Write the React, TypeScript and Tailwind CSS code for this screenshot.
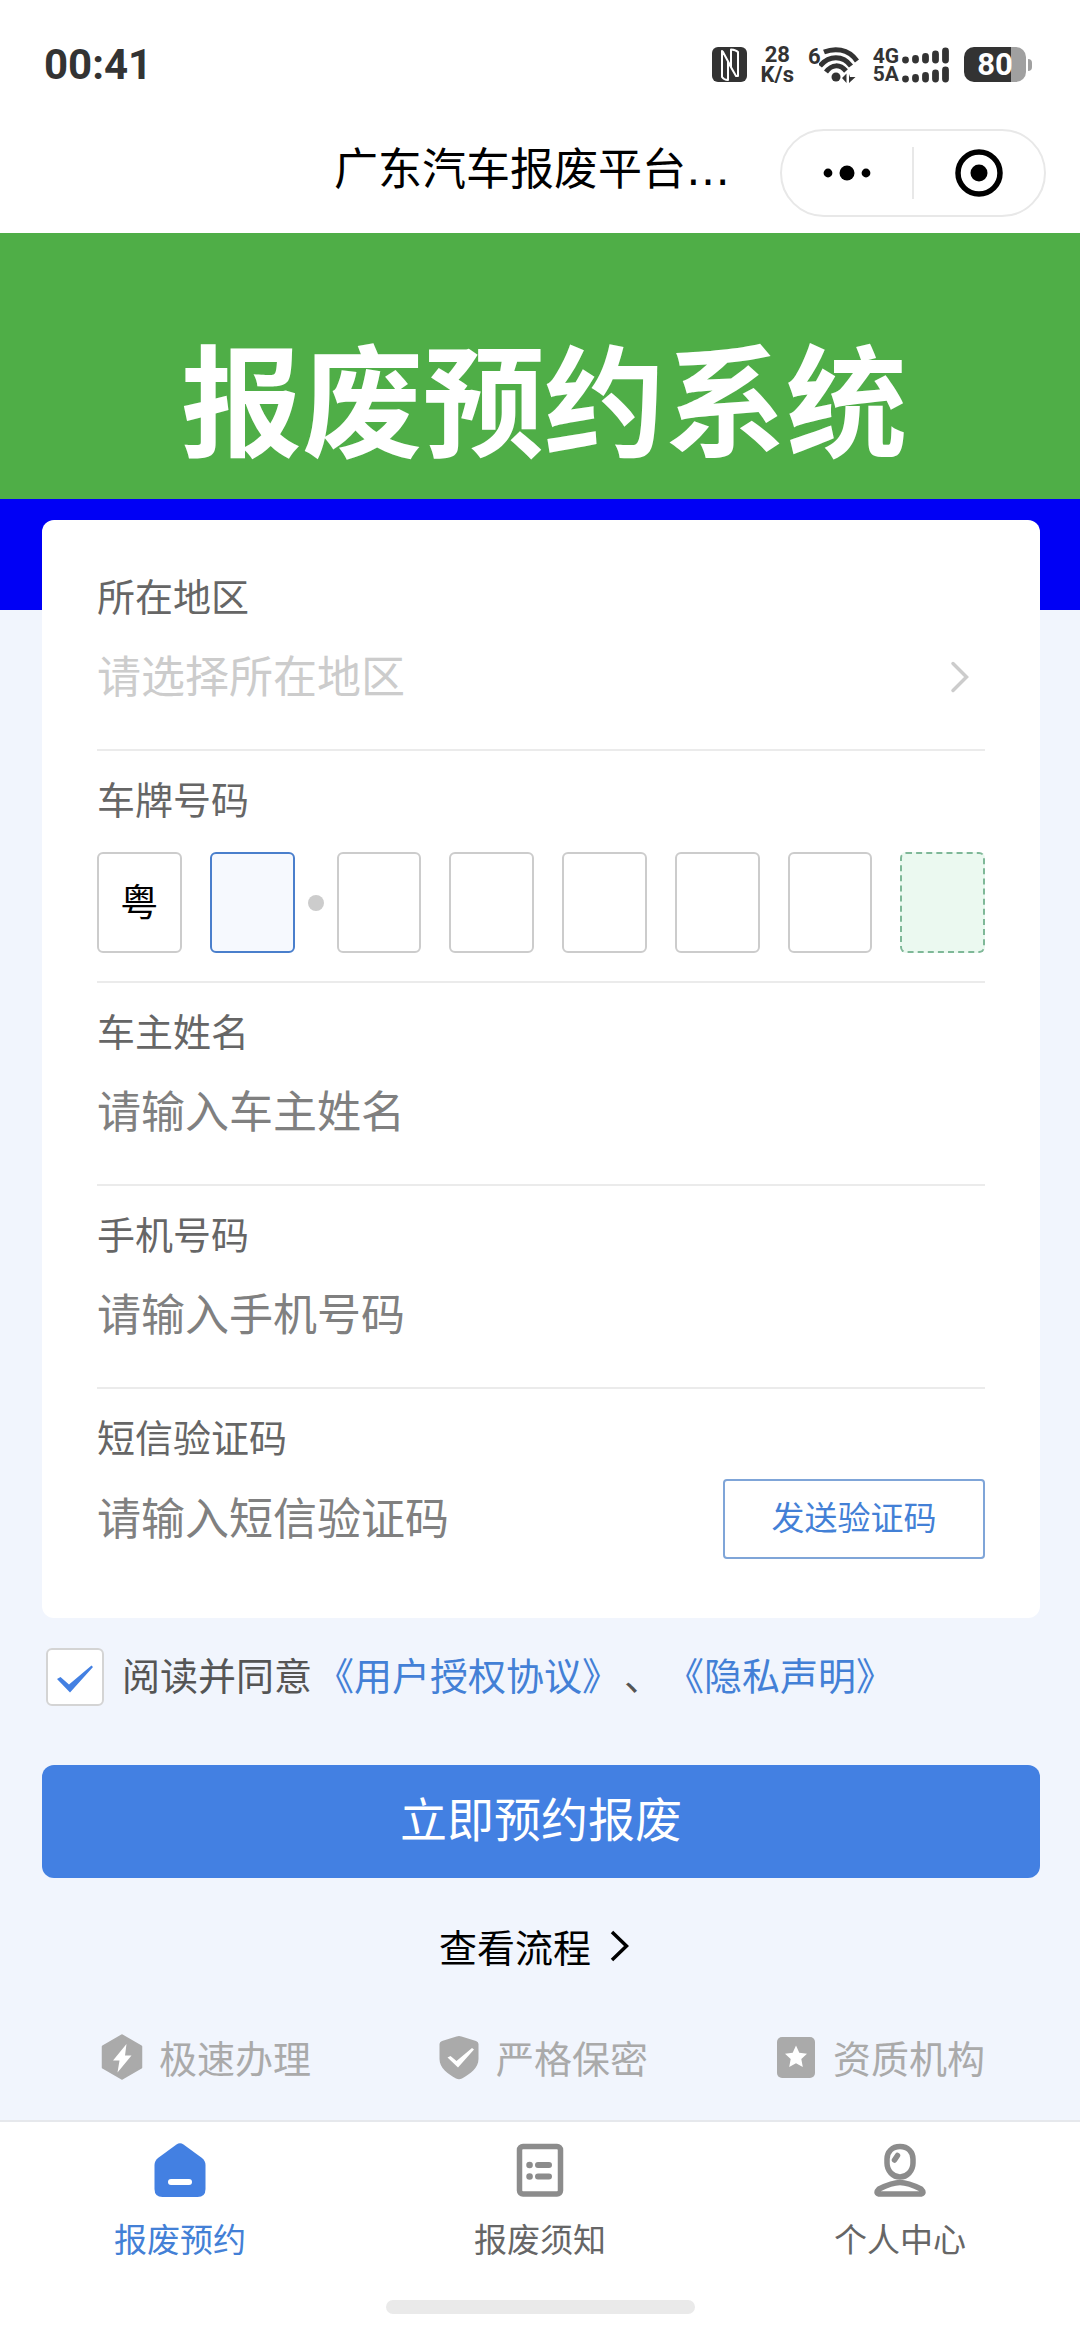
import React, { useState } from 'react';

const StatusBar = () => (
  <div className="flex h-[129px] items-center justify-between pl-11 pr-12 font-['Roboto',sans-serif] text-[#333]">
    <span className="text-[42px] font-bold leading-none">00:41</span>
    <div className="flex items-center gap-[14px]">
      {/* NFC */}
      <svg className="h-[35px] w-[35px]" viewBox="0 0 35 35">
        <rect width="35" height="35" rx="6" fill="#333" />
        <path d="M10 4 L10 30 Q12 33 16 33 L16 15 L24 29 L26 29 L26 5 Q24 3 19 2.500 L19 20 L11 5 Z" fill="none" stroke="#fff" strokeWidth="2" strokeLinejoin="round" />
      </svg>
      {/* Network speed */}
      <div className="flex flex-col items-center text-[22px] font-bold leading-5">
        <span>28</span>
        <span>K/s</span>
      </div>
      {/* Wi-Fi */}
      <div className="flex items-start">
        <span className="text-[22px] font-bold leading-5">6</span>
        <svg className="-ml-0.5 h-[36px] w-[40px]" viewBox="0 0 40 36" fill="none" stroke="#333" strokeWidth="5">
          <path d="M5 5 C15 1 29 1 38 14" />
          <path d="M1 19 C10 8 24 8 32 19" />
          <path d="M7 25 C13 17 21 17 27 24" />
          <circle cx="17" cy="30" r="4.500" fill="#333" stroke="none" />
          <path d="M23 31 L27.500 26.500 V36 Z M30 27 V36 L36.500 30 H31 Z" fill="#333" stroke="none" />
        </svg>
      </div>
      {/* Mobile signal */}
      <div className="flex items-center gap-[3px]">
        <div className="flex flex-col text-[21px] font-bold leading-[18px]">
          <span>4G</span>
          <span>5A</span>
        </div>
        <svg className="h-[36px] w-[48px]" viewBox="0 0 48 36" stroke="#333" strokeWidth="6.800" strokeLinecap="round">
          <path d="M3.500 13 V13.100 M13.500 11.500 V13 M23.500 9.500 V13 M33.500 7 V13 M43.500 4 V13" />
          <path d="M3.500 32 V32.100 M13.500 30.500 V32 M23.500 28.500 V32 M33.500 26 V32 M43.500 23 V32" />
        </svg>
      </div>
      {/* Battery */}
      <div className="flex items-center gap-0.5">
        <div className="flex h-[35px] w-[62px] items-center justify-center rounded-[10px] bg-linear-to-r from-[#333] from-[76%] to-[#a0a0a0] to-[76%]">
          <span className="text-[31px] font-bold leading-none text-white">80</span>
        </div>
        <span className="h-3 w-1 rounded-r bg-[#a0a0a0]" />
      </div>
    </div>
  </div>
);

const TitleBar = () => (
  <header className="flex items-center justify-end pb-4 pr-[34px]">
    <h1 className="pb-2.5 pr-[50px] text-[44px] leading-[60px] text-black">
      广东汽车报废平台<span className="font-['DejaVu_Sans',sans-serif]">…</span>
    </h1>
    <div className="flex h-[88px] w-[266px] items-center rounded-full border-2 border-[#e8e8e8] bg-white">
      <button type="button" aria-label="更多" className="flex h-full flex-1 items-center justify-center">
        <svg className="h-4 w-12" viewBox="0 0 48 16">
          <circle cx="5" cy="8" r="4.400" />
          <circle cx="24" cy="8" r="7.500" />
          <circle cx="43" cy="8" r="4.400" />
        </svg>
      </button>
      <span className="h-[52px] w-0.5 bg-[#e8e8e8]" />
      <button type="button" aria-label="关闭" className="flex h-full flex-1 items-center justify-center">
        <svg className="h-12 w-12" viewBox="0 0 48 48">
          <circle cx="24" cy="24" r="21" fill="none" stroke="#000" strokeWidth="5.500" />
          <circle cx="24" cy="24" r="8.500" />
        </svg>
      </button>
    </div>
  </header>
);

interface FieldProps {
  id: string;
  label: string;
  children: React.ReactNode;
}

const Field = ({ id, label, children }: FieldProps) => (
  <div className="border-b-2 border-[#ebebeb] pb-[42px] pt-[21px]">
    <label htmlFor={id} className="block text-[38px] leading-[52px] text-[#666]">{label}</label>
    <div className="mt-[26px] flex h-[60px] items-center">{children}</div>
  </div>
);

const inputClass =
  'h-[60px] w-full min-w-0 flex-1 bg-transparent pb-1.5 text-[44px] text-[#333] outline-none placeholder:text-[#808080]';

const plateClass = 'h-[101px] w-full min-w-0 flex-1 rounded-md border-2 pb-1.5 text-center text-[38px] text-black outline-none';

const plateStyles = [
  'border-[#ccc] bg-white',
  'border-[#4a7fcc] bg-[#f6f9fe]',
  'border-[#ccc] bg-white',
  'border-[#ccc] bg-white',
  'border-[#ccc] bg-white',
  'border-[#ccc] bg-white',
  'border-[#ccc] bg-white',
  'border-dashed border-[#7fb898] bg-[#ebf9f0]',
];

const PlateField = () => {
  const [plate, setPlate] = useState(['粤', '', '', '', '', '', '', '']);

  const update = (index: number, value: string) => {
    setPlate(plate.map((char, i) => (i === index ? value : char)));
  };

  return (
    <fieldset className="min-w-0 border-b-2 border-[#ebebeb] pb-7 pt-[21px]">
      <legend className="float-left w-full text-[38px] leading-[52px] text-[#666]">车牌号码</legend>
      <div className="clear-both flex items-center gap-7 pt-7">
        {plate.map((char, i) => (
          <React.Fragment key={i}>
            {i === 2 && <span className="-mx-[15px] h-4 w-4 shrink-0 rounded-full bg-[#ccc]" />}
            <input
              aria-label={`车牌号码第${i + 1}位`}
              maxLength={1}
              value={char}
              onChange={(e) => update(i, e.target.value)}
              className={`${plateClass} ${plateStyles[i]}`}
            />
          </React.Fragment>
        ))}
      </div>
    </fieldset>
  );
};

const features = [
  {
    text: '极速办理',
    icon: (
      <svg className="h-[46px] w-[42px]" viewBox="0 0 42 46">
        <path d="M21 1.500 L40 12.500 V33.500 L21 44.500 L2 33.500 V12.500 Z" fill="#aaa" stroke="#aaa" strokeWidth="2.500" strokeLinejoin="round" />
        <path d="M25.500 10 L12 26.500 H18.500 L16.500 38.500 L30.500 21.500 H24 Z" fill="#fff" />
      </svg>
    ),
  },
  {
    text: '严格保密',
    icon: (
      <svg className="h-[46px] w-[42px]" viewBox="0 0 42 46">
        <path d="M18.500 2.500 Q21 1.500 23.500 2.500 L38 7 Q40.500 8 40.500 10 V25 C40.500 34 32 40 24 44.500 Q21 46 18 44.500 C10 40 1.500 34 1.500 25 V10 Q1.500 8 4 7 Z" fill="#aaa" />
        <path d="M9.500 23.500 L12.500 22 L18.500 27 L34 14 L36 15.500 L20 33.500 Z" fill="#fff" />
      </svg>
    ),
  },
  {
    text: '资质机构',
    icon: (
      <svg className="h-[46px] w-[42px]" viewBox="0 0 42 46">
        <rect x="2" y="3" width="38" height="41" rx="5" fill="#aaa" />
        <path d="M21 11.500 L24.300 18.800 L32 19.700 L26.300 25 L27.800 33 L21 29.200 L14.200 33 L15.700 25 L10 19.700 L17.700 18.800 Z" fill="#fff" />
      </svg>
    ),
  },
];

const tabs = [
  {
    text: '报废预约',
    active: true,
    icon: (
      <svg className="h-[54px] w-[52px]" viewBox="0 0 52 54">
        <path d="M22.500 1.500 Q26 -1 29.500 1.500 L48 15 Q51.500 18 51.500 22 V46 Q51.500 54 43.500 54 H8.500 Q0.500 54 0.500 46 V22 Q0.500 18 4 15 Z" fill="#4380e2" />
        <rect x="14" y="36" width="24" height="6" rx="3" fill="#fff" />
      </svg>
    ),
  },
  {
    text: '报废须知',
    active: false,
    icon: (
      <svg className="h-[54px] w-[52px]" viewBox="0 0 52 54" fill="none" stroke="#8c8c8c" strokeWidth="5.500">
        <rect x="5.500" y="3.500" width="41" height="47.500" rx="3.500" />
        <path d="M24 22 H35 M24 33.500 H35" strokeWidth="6" strokeLinecap="round" />
        <path d="M15.500 22 H15.600 M15.500 33.500 H15.600" strokeWidth="6.500" strokeLinecap="round" />
      </svg>
    ),
  },
  {
    text: '个人中心',
    active: false,
    icon: (
      <svg className="h-[54px] w-[52px]" viewBox="0 0 52 54" fill="none" stroke="#8c8c8c" strokeWidth="5.500" strokeLinejoin="round">
        <path d="M26 3.500 C34 3.500 39 9 39 16 V20 C39 28 33 34 26 34 C19 34 13 28 13 20 V16 C13 9 18 3.500 26 3.500 Z" />
        <path d="M20.500 17 L23.500 12.500" strokeLinecap="round" />
        <path d="M5 46 C13 42 19 39.500 26 39.500 C33 39.500 39 42 47 46 Q51 50 47 51 H5 Q1 50 5 46 Z" />
      </svg>
    ),
  },
];

const App = () => {
  const [agreed, setAgreed] = useState(true);

  return (
    <div className="flex min-h-screen flex-col bg-[#f1f5fd] font-['Noto_Sans_CJK_SC',sans-serif]">
      <div className="bg-white">
        <StatusBar />
        <TitleBar />
      </div>

      {/* Banner */}
      <div className="flex h-[266px] items-center justify-center bg-[#4fae47] pl-2 pt-14">
        <h2 className="text-[121px] font-bold leading-none text-white">报废预约系统</h2>
      </div>
      <div className="h-[111px] bg-[#0000f5]" />

      <form className="-mt-[90px] px-10 pl-[42px]" onSubmit={(e) => e.preventDefault()}>
        <div className="rounded-xl bg-white px-[55px] pb-[59px] pt-[28px]">
          <Field id="region" label="所在地区">
            <select id="region" defaultValue="" className="h-[60px] min-w-0 flex-1 appearance-none bg-transparent pb-1.5 text-[44px] leading-[54px] text-[#ccc] outline-none">
              <option value="">请选择所在地区</option>
            </select>
            <svg className="mr-4 h-8 w-5" viewBox="0 0 20 32" fill="none" stroke="#ccc" strokeWidth="3.500" strokeLinecap="round">
              <path d="M4 2.500 L17.500 16 L4 29.500" />
            </svg>
          </Field>

          <PlateField />

          <Field id="owner" label="车主姓名">
            <input id="owner" type="text" placeholder="请输入车主姓名" className={inputClass} />
          </Field>

          <Field id="phone" label="手机号码">
            <input id="phone" type="tel" placeholder="请输入手机号码" className={inputClass} />
          </Field>

          <div className="pt-[21px]">
            <label htmlFor="code" className="block text-[38px] leading-[52px] text-[#666]">短信验证码</label>
            <div className="mt-[17px] flex items-center">
              <input id="code" type="text" placeholder="请输入短信验证码" className={inputClass} />
              <button type="button" className="h-20 w-[262px] shrink-0 rounded border-2 border-[#7fa5d8] pb-1 text-[33px] text-[#4380d6]">
                发送验证码
              </button>
            </div>
          </div>
        </div>

        {/* Agreement */}
        <div className="mt-[30px] flex items-start pl-1 text-[38px] leading-[52px] text-[#555]">
          <span className="grid shrink-0">
            <input
              id="agree"
              type="checkbox"
              checked={agreed}
              onChange={(e) => setAgreed(e.target.checked)}
              className="col-start-1 row-start-1 h-[58px] w-[58px] appearance-none rounded-md border-2 border-[#d4d4d4] bg-white"
            />
            {agreed && (
              <svg className="pointer-events-none col-start-1 row-start-1 h-[58px] w-[58px]" viewBox="0 0 58 58">
                <path d="M11 31 L14.500 29 L23 36.500 L45.500 17.500 L47 19 L24 44.500 Z" fill="#4380e2" />
              </svg>
            )}
          </span>
          <label htmlFor="agree" className="pl-[18px] pr-1">阅读并同意</label>
          <a href="#agreement" className="text-[#4380d6]">《用户授权协议》</a>
          <span className="px-1">、</span>
          <a href="#privacy" className="text-[#4380d6]">《隐私声明》</a>
        </div>

        <button type="submit" className="mt-[59px] h-[113px] w-full rounded-xl bg-[#4380e2] pb-2 text-[47px] text-white">
          立即预约报废
        </button>
      </form>

      <a href="#process" className="mx-auto mt-[42px] flex items-center gap-[18px] pr-3 text-[38px] leading-[52px] text-black">
        查看流程
        <svg className="h-8 w-5" viewBox="0 0 20 32" fill="none" stroke="#000" strokeWidth="3.500">
          <path d="M3 2 L17.500 16 L3 30" />
        </svg>
      </a>

      <ul className="mt-[59px] flex justify-between pl-[101px] pr-[95px] text-[38px] leading-[52px] text-[#aaa]">
        {features.map((feature) => (
          <li key={feature.text} className="flex items-center gap-4">
            {feature.icon}
            {feature.text}
          </li>
        ))}
      </ul>

      {/* Bottom tabs */}
      <footer className="mt-auto border-t-2 border-[#e6e8ec] bg-white pb-4 pt-[21px]">
        <nav className="grid grid-cols-3">
          {tabs.map((tab) => (
            <a
              key={tab.text}
              href={`#${tab.text}`}
              className={`flex flex-col items-center gap-[19px] text-[33px] leading-[44px] ${tab.active ? 'text-[#4380d6]' : 'text-[#666]'}`}
            >
              {tab.icon}
              {tab.text}
            </a>
          ))}
        </nav>
        <div className="mx-auto mt-10 h-[14px] w-[309px] rounded-full bg-[#eaeaea]" />
      </footer>
    </div>
  );
};

export default App;
